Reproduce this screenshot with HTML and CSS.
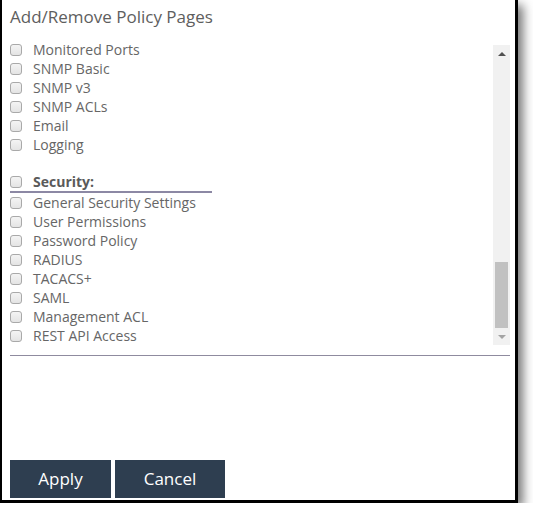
FILE: index.html
```html
<!DOCTYPE html>
<html>
<head>
<meta charset="utf-8">
<link rel="stylesheet" href="styles.css">
</head>
<body>
<div class="frame">
  <div class="title">Add/Remove Policy Pages</div>
  <div class="pane">
    <div class="list">
      <div class="row"><span class="cb"></span><span>Monitored Ports</span></div>
      <div class="row"><span class="cb"></span><span>SNMP Basic</span></div>
      <div class="row"><span class="cb"></span><span>SNMP v3</span></div>
      <div class="row"><span class="cb"></span><span>SNMP ACLs</span></div>
      <div class="row"><span class="cb"></span><span>Email</span></div>
      <div class="row"><span class="cb"></span><span>Logging</span></div>
      <div class="row group"><span class="cb"></span><span>Security:</span></div>
      <div class="row"><span class="cb"></span><span>General Security Settings</span></div>
      <div class="row"><span class="cb"></span><span>User Permissions</span></div>
      <div class="row"><span class="cb"></span><span>Password Policy</span></div>
      <div class="row"><span class="cb"></span><span>RADIUS</span></div>
      <div class="row"><span class="cb"></span><span>TACACS+</span></div>
      <div class="row"><span class="cb"></span><span>SAML</span></div>
      <div class="row"><span class="cb"></span><span>Management ACL</span></div>
      <div class="row"><span class="cb"></span><span>REST API Access</span></div>
    </div>
    <div class="scrollbar">
      <div class="sb-btn"><span class="arrow-up"></span></div>
      <div class="sb-track"><div class="sb-thumb"></div></div>
      <div class="sb-btn"><span class="arrow-down"></span></div>
    </div>
  </div>
  <div class="divider"></div>
  <div class="actions">
    <button class="btn apply">Apply</button>
    <button class="btn cancel">Cancel</button>
  </div>
</div>
</body>
</html>
```

FILE: styles.css
```css
html, body {
  margin: 0;
  padding: 0;
  background: #ffffff;
}

.frame {
  box-sizing: border-box;
  width: 518px;
  height: 503px;
  background: #ffffff;
  border-left: 2px solid #000;
  border-right: 3px solid #000;
  border-bottom: 3px solid #000;
  box-shadow: 5px 5px 10px rgba(0, 0, 0, 0.55);
  padding-left: 8px;
  font-family: "Open Sans", "Liberation Sans", sans-serif;
  color: #666666;
  display: flex;
  flex-direction: column;
}

.title {
  font-size: 17px;
  line-height: 24px;
  padding-top: 5px;
  margin-bottom: 11px;
  color: #5e5e5e;
}

.pane {
  display: flex;
  width: 500px;
}

.list {
  width: 483px;
  display: flex;
  flex-direction: column;
}

.row {
  display: flex;
  align-items: center;
  height: 19px;
  font-size: 14px;
  line-height: 19px;
}

.row.group {
  margin-top: 18px;
  width: 202px;
  border-bottom: 2px solid #8c88a4;
  font-weight: bold;
  color: #5a5a5a;
}

.cb {
  box-sizing: border-box;
  width: 12px;
  height: 12px;
  border: 1px solid #a9a9a9;
  border-radius: 3px;
  background: linear-gradient(#f4f4f4, #e4e4e4);
  margin-right: 11px;
  flex: none;
}

.scrollbar {
  width: 17px;
  height: 300px;
  margin-top: 5px;
  background: #f1f1f1;
  display: flex;
  flex-direction: column;
}

.sb-btn {
  height: 17px;
  display: flex;
  align-items: center;
  justify-content: center;
  flex: none;
}

.arrow-up {
  width: 0;
  height: 0;
  border-left: 4px solid transparent;
  border-right: 4px solid transparent;
  border-bottom: 4px solid #505050;
}

.arrow-down {
  width: 0;
  height: 0;
  border-left: 4px solid transparent;
  border-right: 4px solid transparent;
  border-top: 4px solid #a3a3a3;
}

.sb-track {
  flex: 1;
  display: flex;
  flex-direction: column;
  justify-content: flex-end;
}

.sb-thumb {
  height: 66px;
  margin: 0 2px;
  background: #c1c1c1;
}

.divider {
  width: 500px;
  height: 1px;
  background: #8f8b9f;
  margin-top: 10px;
}

.actions {
  display: flex;
  gap: 4px;
  margin-top: 104px;
}

.btn {
  height: 38px;
  border: none;
  background: #2e3e50;
  color: #ffffff;
  font-family: "Open Sans", "Liberation Sans", sans-serif;
  font-size: 17px;
  padding: 0 0 2px 0;
  margin: 0;
}

.apply { width: 101px; }
.cancel { width: 110px; }
```
